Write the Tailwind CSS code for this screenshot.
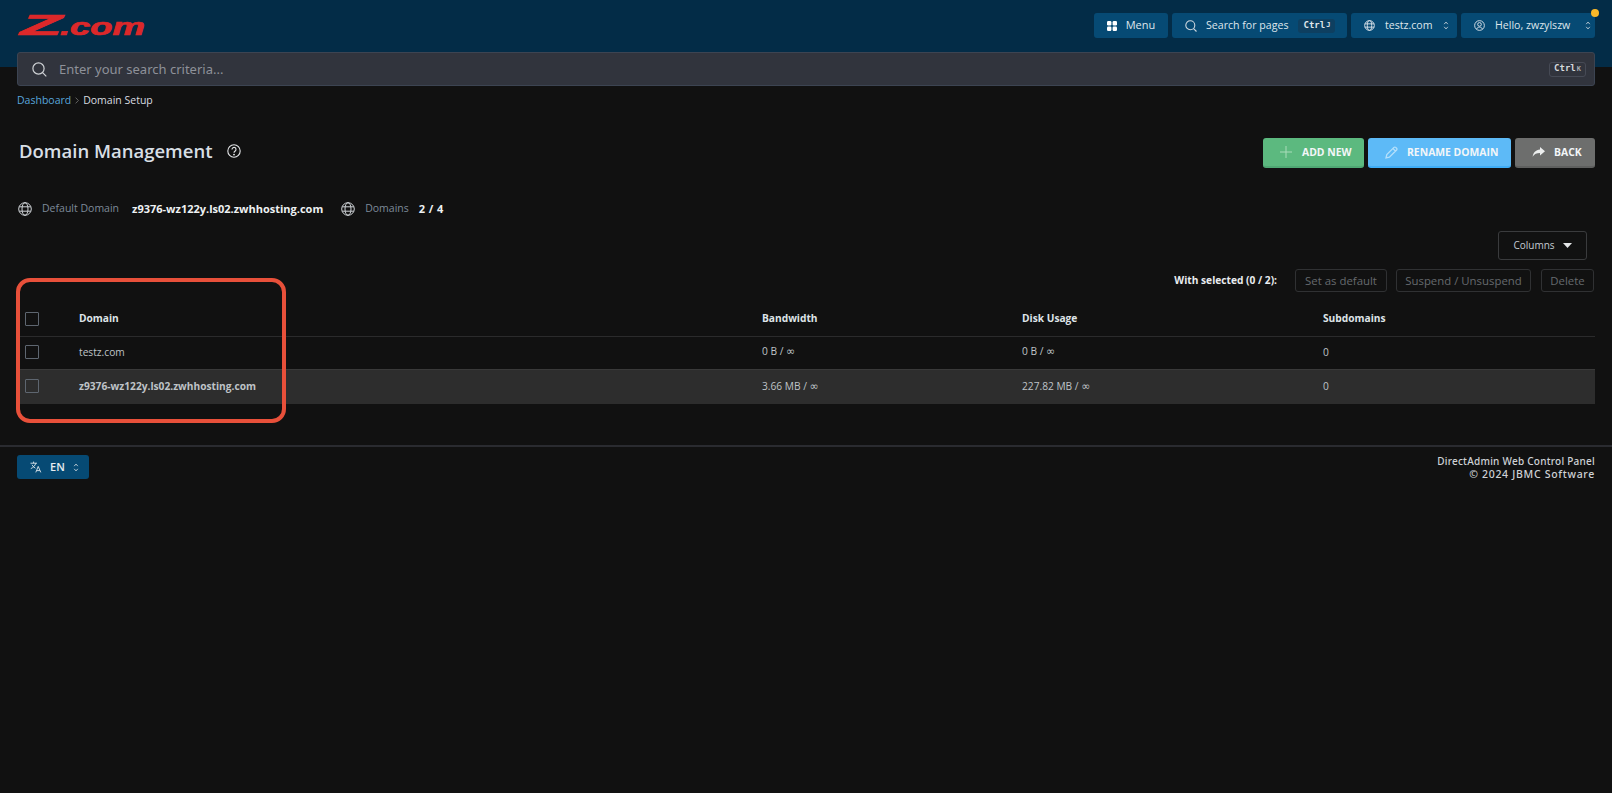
<!DOCTYPE html>
<html>
<head>
<meta charset="utf-8">
<script src="https://cdn.jsdelivr.net/npm/@tailwindcss/browser@4"></script>
</head>
<body class="relative h-[793px] overflow-hidden bg-[#111111] font-['Open_Sans',sans-serif] text-[10.2px] text-[#d5d9de]">

<header class="flex h-[67px] items-start justify-between bg-[#032c47] pl-[18px] pr-[17px] pt-[13px]">
  <svg class="mt-[-5px] h-[34px] w-[132px] overflow-visible" viewBox="0 0 132 34">
    <text x="2" y="27" font-family="Liberation Sans" font-weight="700" font-style="italic" font-size="30" fill="#dc282a" stroke="#dc282a" stroke-width="0.7" textLength="42" lengthAdjust="spacingAndGlyphs">Z</text>
    <text x="42" y="27" font-family="Liberation Sans" font-weight="700" font-style="italic" font-size="23" fill="#dc282a" stroke="#dc282a" stroke-width="0.7" textLength="85" lengthAdjust="spacingAndGlyphs">.com</text>
  </svg>
  <div class="flex h-[25px] gap-1 text-[10.6px] text-[#dfe6ec]">
    <div class="flex w-[74px] items-center justify-center gap-[9px] rounded-[3px] bg-[#064a74] text-[11px]">
      <svg class="size-[10px]" viewBox="0 0 10 10" fill="#fff"><rect width="4.4" height="4.4" rx="1.2"/><rect x="5.6" width="4.4" height="4.4" rx="1.2"/><rect y="5.6" width="4.4" height="4.4" rx="1.2"/><rect x="5.6" y="5.6" width="4.4" height="4.4" rx="1.2"/></svg>
      <span>Menu</span>
    </div>
    <div class="flex w-[175px] items-center rounded-[3px] bg-[#064a74] pl-[13px]">
      <svg class="size-[12px]" viewBox="0 0 12 12" fill="none" stroke="#cfd8df" stroke-width="1.1"><circle cx="5.3" cy="5.3" r="4.5"/><path d="M8.6 8.6 11.5 11.5"/></svg>
      <span class="ml-[9px]">Search for pages</span>
      <span class="ml-[10px] flex h-[14px] w-[37px] items-center justify-center rounded-[3px] bg-[#0e3f60] font-['DejaVu_Sans_Mono',monospace] text-[9px] font-bold">Ctrl<span class="ml-[1px] text-[7px]">J</span></span>
    </div>
    <div class="flex w-[106px] items-center rounded-[3px] bg-[#064a74] pl-[13px]">
      <svg class="size-[11px]" viewBox="0 0 12 12" fill="none" stroke="#dfe6ec" stroke-width="1"><circle cx="6" cy="6" r="5.3"/><ellipse cx="6" cy="6" rx="2.4" ry="5.3"/><path d="M1 4.2H11M1 7.8H11"/></svg>
      <span class="ml-[10px]">testz.com</span>
      <svg class="ml-[10px] h-[9px] w-[6px]" viewBox="0 0 6 10" fill="none" stroke="#c8d2da" stroke-width="1"><path d="M1 3.5 3 1.2 5 3.5M1 6.5 3 8.8 5 6.5"/></svg>
    </div>
    <div class="relative flex w-[134px] items-center rounded-[3px] bg-[#064a74] pl-[13px]">
      <svg class="size-[11px]" viewBox="0 0 12 12" fill="none" stroke="#dfe6ec" stroke-width="1"><circle cx="6" cy="6" r="5.3"/><circle cx="6" cy="4.8" r="2"/><path d="M2.8 10c.7-1.6 1.8-2.2 3.2-2.2s2.5.6 3.2 2.2"/></svg>
      <span class="ml-[10px]">Hello, zwzylszw</span>
      <svg class="ml-[15px] h-[9px] w-[6px]" viewBox="0 0 6 10" fill="none" stroke="#c8d2da" stroke-width="1"><path d="M1 3.5 3 1.2 5 3.5M1 6.5 3 8.8 5 6.5"/></svg>
      <span class="absolute right-[-4px] top-[-4px] size-[8px] rounded-full bg-[#fbb929]"></span>
    </div>
  </div>
</header>

<div class="relative mx-[17px] mt-[-15px] flex h-[34px] items-center rounded-[3px] border border-[#3c4452] bg-[#31343d] pl-[14px] pr-[8px]">
  <svg class="size-[15px]" viewBox="0 0 15 15" fill="none" stroke="#cfd2d6" stroke-width="1.2"><circle cx="6.5" cy="6.5" r="5.6"/><path d="M10.6 10.6 14.3 14.3"/></svg>
  <span class="ml-[12px] mt-[1px] font-['Noto_Sans',sans-serif] text-[13px] text-[#8e9199]">Enter your search criteria...</span>
  <span class="ml-auto flex h-[15px] w-[37px] items-center justify-center rounded-[3px] border border-[#464a55] font-['DejaVu_Sans_Mono',monospace] text-[9px] font-bold text-[#d5d8dc]">Ctrl<span class="ml-[1px] text-[7px] text-[#a9adb3]">K</span></span>
</div>

<nav class="ml-[17px] mt-[7px] flex h-[15px] items-center gap-[4px] text-[10.5px]">
  <span class="text-[#58a6dc]">Dashboard</span>
  <svg class="h-[7px] w-[4px]" viewBox="0 0 4 7" fill="none" stroke="#777" stroke-width=".8"><path d="M.6.6 3.4 3.5.6 6.4"/></svg>
  <span class="text-[#d9dce0]">Domain Setup</span>
</nav>

<div class="mt-[30px] flex h-[30px] items-center justify-between pl-[19px] pr-[17px]">
  <div class="mt-[-4px] flex items-center">
    <h1 class="text-[18.5px] font-semibold text-[#d8dfe5]">Domain Management</h1>
    <svg class="ml-[14px] size-[14px]" viewBox="0 0 14 14" fill="none" stroke="#e4e6e8" stroke-width="1.1"><circle cx="7" cy="7" r="6.2"/><path d="M5 5.4a2 2 0 1 1 3.2 1.6C7.4 7.6 7 8 7 8.8"/><circle cx="7" cy="10.6" r=".4"/></svg>
  </div>
  <div class="flex gap-[4px] text-[10.4px] font-bold text-[#f3f6f8]">
    <div class="flex h-[30px] w-[101px] items-center rounded-[3px] border-b-2 border-[#4fa873] bg-[#5cb97f] pl-[17px]">
      <svg class="size-[12px]" viewBox="0 0 12 12" stroke="#a9dcba" stroke-width="1"><path d="M6 0V12M0 6H12"/></svg>
      <span class="ml-[10px] mt-[1px]">ADD NEW</span>
    </div>
    <div class="flex h-[30px] w-[143px] items-center rounded-[3px] border-b-2 border-[#3fadf6] bg-[#5dbaf7] pl-[17px]">
      <svg class="size-[13px]" viewBox="0 0 13 13" fill="none" stroke="#b4e0fb" stroke-width="1.3"><path d="M1 12 1.8 8.6 9 1.4a1.2 1.2 0 0 1 1.7 0l.9.9a1.2 1.2 0 0 1 0 1.7L4.4 11.2ZM8 2.6 10.4 5"/></svg>
      <span class="ml-[9px] mt-[1px]">RENAME DOMAIN</span>
    </div>
    <div class="flex h-[30px] w-[80px] items-center rounded-[3px] border-b-2 border-[#5f605f] bg-[#6d6e6d] pl-[17px]">
      <svg class="h-[10px] w-[13px]" viewBox="0 0 13 10" fill="#eceeee"><path d="M8 0 13 4.2 8 8.4V6C4.6 6 2.4 7 .6 9.8 1.2 5.6 3.6 2.8 8 2.4Z"/></svg>
      <span class="ml-[9px] mt-[1px]">BACK</span>
    </div>
  </div>
</div>

<div class="mt-[24px] flex h-[34px] items-center pl-[18px] text-[10.5px]">
  <svg class="size-[14px]" viewBox="0 0 14 14" fill="none" stroke="#cfd3d7" stroke-width="1"><circle cx="7" cy="7" r="6.3"/><ellipse cx="7" cy="7" rx="3" ry="6.3"/><path d="M1.2 4.8H12.8M1.2 9.2H12.8"/></svg>
  <span class="ml-[10px] text-[#7d8a99]">Default Domain</span>
  <span class="ml-[13px] text-[11px] font-bold text-[#eef1f3]">z9376-wz122y.ls02.zwhhosting.com</span>
  <svg class="ml-[18px] size-[14px]" viewBox="0 0 14 14" fill="none" stroke="#cfd3d7" stroke-width="1"><circle cx="7" cy="7" r="6.3"/><ellipse cx="7" cy="7" rx="3" ry="6.3"/><path d="M1.2 4.8H12.8M1.2 9.2H12.8"/></svg>
  <span class="ml-[10px] text-[#7d8a99]">Domains</span>
  <span class="ml-[10px] text-[11px] font-bold tracking-[0.4px] text-[#eef1f3]">2 / 4</span>
</div>

<div class="mt-[5px] flex justify-end pr-[25px]">
  <div class="flex h-[29px] w-[89px] items-center justify-center gap-[8px] rounded-[3px] border border-[#3a3b3d] text-[10px] text-[#c5ccd3]">
    <span>Columns</span>
    <svg class="h-[5px] w-[9px]" viewBox="0 0 9 5" fill="#e4e6e8"><path d="M0 0H9L4.5 5Z"/></svg>
  </div>
</div>

<div class="mt-[9px] flex h-[23px] items-center justify-end pr-[18px]">
  <span class="mr-[18px] font-bold text-[#e9ecef]">With selected (0 / 2):</span>
  <span class="flex h-[23px] w-[92px] items-center justify-center rounded-[3px] border border-[#303133] text-[11.4px] text-[#666a6e]">Set as default</span>
  <span class="ml-[9px] flex h-[23px] w-[135px] items-center justify-center rounded-[3px] border border-[#303133] text-[11.4px] text-[#666a6e]">Suspend / Unsuspend</span>
  <span class="ml-[10px] flex h-[23px] w-[53px] items-center justify-center rounded-[3px] border border-[#303133] text-[11.4px] text-[#666a6e]">Delete</span>
</div>

<table class="ml-[17px] mt-[8px] w-[1578px] table-fixed border-collapse text-left">
  <colgroup><col class="w-[54px]"><col class="w-[683px]"><col class="w-[260px]"><col class="w-[301px]"><col class="w-[280px]"></colgroup>
  <thead>
    <tr class="h-[36px] border-b border-[#2b2b2c] font-bold text-[#dfe4e8]">
      <th class="pl-2 pt-[2px]"><span class="block size-[14px] rounded-[1px] border border-[#5e6670]"></span></th>
      <th class="pl-2 pt-[2px] font-bold">Domain</th>
      <th class="pl-2 pt-[2px] font-bold">Bandwidth</th>
      <th class="pl-2 pt-[2px] font-bold">Disk Usage</th>
      <th class="pl-2 pt-[2px] font-bold">Subdomains</th>
    </tr>
  </thead>
  <tbody>
    <tr class="h-[33px] border-b border-[#3a3a3a] text-[#bfc3c7]">
      <td class="pb-[1px] pl-2"><span class="block size-[14px] rounded-[1px] border border-[#5e6670]"></span></td>
      <td class="pl-2">testz.com</td>
      <td class="pl-2">0 B / <span class="font-['DejaVu_Sans',sans-serif] text-[11px]">∞</span></td>
      <td class="pl-2">0 B / <span class="font-['DejaVu_Sans',sans-serif] text-[11px]">∞</span></td>
      <td class="pl-2">0</td>
    </tr>
    <tr class="h-[35px] bg-[#2d2d2d] text-[#bfc3c7]">
      <td class="pb-[1px] pl-2"><span class="block size-[14px] rounded-[1px] border border-[#5e6670]"></span></td>
      <td class="pl-2 font-bold">z9376-wz122y.ls02.zwhhosting.com</td>
      <td class="pl-2">3.66 MB / <span class="font-['DejaVu_Sans',sans-serif] text-[11px]">∞</span></td>
      <td class="pl-2">227.82 MB / <span class="font-['DejaVu_Sans',sans-serif] text-[11px]">∞</span></td>
      <td class="pl-2">0</td>
    </tr>
  </tbody>
</table>

<footer class="mt-[41px] flex h-[34px] items-start justify-between border-t-2 border-[#2a2b30] px-[17px] pt-[8px]">
  <div class="flex h-[24px] w-[72px] items-center rounded-[3px] bg-[#064a74] pl-[13px] text-[11px] text-[#e6ecf0]">
    <svg class="size-[12px]" viewBox="0 0 12 12" fill="none" stroke="#dfe6ec" stroke-width=".9"><path d="M.5 2.2H7M3.6.6V2.2M5.8 2.2C5.2 4.6 3.2 6.6.8 7.6M2 3.8c.7 1.5 2 2.7 3.4 3.4M5.8 11.4 8.2 5.4 10.8 11.4M6.8 9.6H9.9"/></svg>
    <span class="ml-[8px] font-semibold">EN</span>
    <svg class="ml-[8px] h-[9px] w-[6px]" viewBox="0 0 6 10" fill="none" stroke="#c8d2da" stroke-width="1"><path d="M1 3.5 3 1.2 5 3.5M1 6.5 3 8.8 5 6.5"/></svg>
  </div>
  <div class="text-right font-['Noto_Sans',sans-serif] text-[10px] font-medium leading-[12.5px] tracking-[0.25px] text-[#cfd2d6]">
    <p>DirectAdmin Web Control Panel</p>
    <p class="text-[10.5px] tracking-[0.7px]">© 2024 JBMC Software</p>
  </div>
</footer>

<div class="absolute left-[16px] top-[278px] h-[145px] w-[270px] rounded-[14px] border-4 border-[#e8503a]"></div>

</body>
</html>
